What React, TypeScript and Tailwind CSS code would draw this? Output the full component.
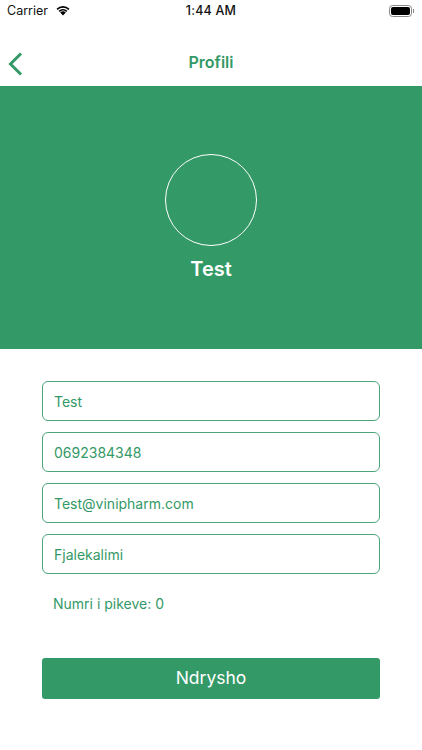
export default function App() { return (
<div className="w-[422px] h-[750px] bg-white flex flex-col text-[#339966] font-['Inter',sans-serif]">
<div className="h-[22px] flex items-center justify-between pl-[7px] pr-[8px] text-[#111] relative">
<div className="flex items-center gap-[7px]"><span className="text-[12.5px]">Carrier</span>
<svg width="16" height="12" viewBox="0 0 16 12" className="-mt-[2px]"><path d="M8 11.5 L5.2 8.5 A4.2 4.2 0 0 1 10.8 8.5Z M3.6 6.8 A6.6 6.6 0 0 1 12.4 6.8 L11.3 8 A5 5 0 0 0 4.7 8Z M1.5 4.7 A9.4 9.4 0 0 1 14.5 4.7 L13.4 5.9 A7.8 7.8 0 0 0 2.6 5.9Z" fill="#000"/></svg></div>
<span className="absolute left-0 right-0 text-center text-[12.5px] font-medium tracking-[0.2px]">1:44 AM</span>
<div className="flex items-center gap-[1px]"><div className="w-[23px] h-[12px] border border-[#888] rounded-[3.5px] p-[1px]"><div className="bg-black h-full rounded-[2px]"/></div><div className="w-[1px] h-[4px] bg-[#888]"/></div>
</div>
<div className="h-[64px] flex items-center justify-center relative">
<svg className="absolute left-[8px] top-[30px]" width="15" height="24" viewBox="0 0 15 24"><path d="M13 1.5 L2.5 12 L13 22.5" fill="none" stroke="#339966" strokeWidth="3"/></svg>
<span className="text-[16px] font-semibold mt-[16px]">Profili</span></div>
<div className="h-[263px] bg-[#339966] flex flex-col items-center pt-[68px] text-white"><div className="w-[92px] h-[92px] rounded-full border border-white"/><div className="text-[20px] font-semibold mt-[9px] leading-[28px]">Test</div></div>
<div className="px-[42px] pt-[32px] flex flex-col gap-[11px]">
{["Test","0692384348","Test@vinipharm.com","Fjalekalimi"].map(t=><div key={t} className="h-[40px] border-[1.5px] border-[#4aa57a] rounded-[6px] px-[11px] flex items-center text-[14px]">{t}</div>)}
</div>
<div className="pl-[53px] mt-[19px] text-[14px] leading-[22px]">Numri i pikeve: 0</div>
<div className="mx-[42px] mt-[43px] h-[41px] bg-[#339966] rounded-[3px] text-white text-[17.5px] flex items-center justify-center">Ndrysho</div>
</div>) }
